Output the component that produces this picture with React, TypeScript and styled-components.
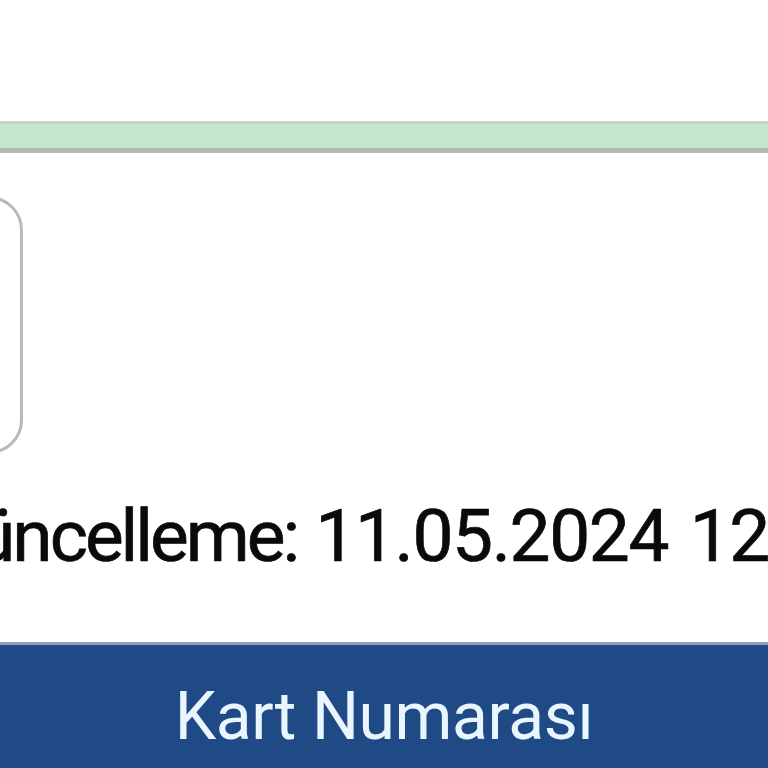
import styled, { createGlobalStyle } from 'styled-components'

const GlobalStyle = createGlobalStyle`
  html, body {
    margin: 0;
    padding: 0;
    background: #ffffff;
  }
  body {
    font-family: Roboto, "Noto Sans", Arial, sans-serif;
    overflow: hidden;
  }
`

const Screen = styled.div`
  width: 768px;
  height: 768px;
  overflow: hidden;
  display: flex;
  flex-direction: column;
  background: #ffffff;
`

const TopSpace = styled.div`
  height: 121px;
  flex-shrink: 0;
`

const StatusStrip = styled.div`
  height: 24px;
  flex-shrink: 0;
  background: #c5e6cb;
  border-top: 3px solid #c9cfc9;
  border-bottom: 5px solid #b3bab4;
`

const CardArea = styled.div`
  padding-top: 43px;
  flex-shrink: 0;
`

const InfoBox = styled.div`
  width: 300px;
  height: 252px;
  margin-left: -283px;
  border: 3px solid #b9b9b9;
  border-radius: 34px;
`

const UpdatedLine = styled.div`
  margin-top: 38px;
  margin-left: -203px;
  font-size: 73px;
  line-height: 88px;
  color: #0a0a0a;
  white-space: nowrap;
  -webkit-text-stroke: 0.7px #0a0a0a;
`

const UpdatedLabel = styled.span`
  letter-spacing: -3px;
`

const UpdatedValue = styled.span`
  letter-spacing: -1.4px;
  word-spacing: 5px;
`

const Spacer = styled.div`
  flex: 1;
`

const HeaderBar = styled.div`
  height: 126px;
  flex-shrink: 0;
  padding-top: 20px;
  box-sizing: border-box;
  background: #1f4a85;
  border-top: 3px solid #8da2bf;
  display: flex;
  align-items: center;
  justify-content: center;
  color: #eaf6ff;
  font-size: 66px;
  letter-spacing: -0.4px;
`

const HeaderTitle = styled.span`
  display: block;
`

export default function App() {
  return (
    <>
      <GlobalStyle />
      <Screen>
        <TopSpace />
        <StatusStrip />
        <CardArea>
          <InfoBox />
        </CardArea>
        <UpdatedLine>
          <UpdatedLabel>Son Güncelleme:</UpdatedLabel>{' '}
          <UpdatedValue>11.05.2024 12:30</UpdatedValue>
        </UpdatedLine>
        <Spacer />
        <HeaderBar>
          <HeaderTitle>Kart Numarası</HeaderTitle>
        </HeaderBar>
      </Screen>
    </>
  )
}
